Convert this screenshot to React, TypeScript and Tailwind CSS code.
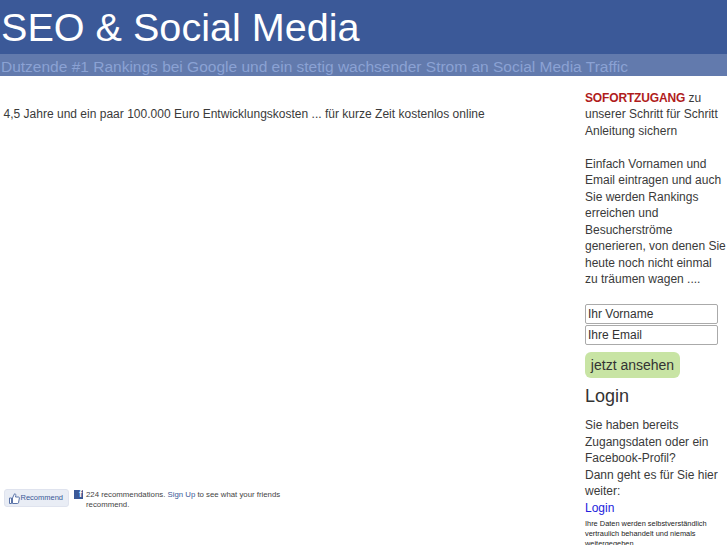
export default function App() {
  return (
    <div className="h-[545px] w-[727px] overflow-hidden bg-white font-['Liberation_Sans',Arial,sans-serif] text-[#3a3a3a]">
      <header className="h-[54px] bg-[#3b5998] pl-px text-[39.6px] leading-[54px] text-white">SEO &amp; Social Media</header>
      <div className="h-[22px] overflow-hidden bg-[#627aad] pl-px text-[15.500px] leading-[25px] text-[#8ba2d4]">
        Dutzende #1 Rankings bei Google und ein stetig wachsender Strom an Social Media Traffic
      </div>
      <div className="flex h-[469px]">
        <main className="flex w-[585px] shrink-0 flex-col pl-[3.500px]">
          <p className="mt-[30px] text-[12px] leading-[16px] tracking-[0.01px]">4,5 Jahre und ein paar 100.000 Euro Entwicklungskosten ... für kurze Zeit kostenlos online</p>
          <div className="mt-[367px] flex items-start">
            <button className="flex h-[18px] w-[65px] items-center gap-px rounded-[3px] border border-[#dfe3ee] bg-[#e9edf5] pl-[4px] text-[7.500px] text-[#3b5998]">
              <svg width="11" height="11" viewBox="0 0 11 11" fill="#fff" stroke="#5b74a8" strokeWidth="1"><path d="M.5 5h2v5.500h-2zM3.500 5l2-4.200c1 0 1.500.6 1.300 1.600L6.500 4h3c.6 0 1 .5.900 1l-.9 4.800c-.1.400-.4.700-.8.700H3.500z" /></svg>
              Recommend
            </button>
            <div className="ml-[5.500px] mt-px flex h-[9px] w-[9px] shrink-0 items-end justify-end bg-[#3b5998] pr-px text-[9px] font-bold leading-[9px] text-white">f</div>
            <p className="ml-[3px] mt-px w-[200px] text-[7.800px] leading-[10px] text-[#444]">
              224 recommendations. <span className="text-[#3b5998]">Sign Up</span> to see what your friends recommend.
            </p>
          </div>
        </main>
        <aside className="w-[142px] shrink-0 pt-[13.750px] text-[12px] leading-[16.500px]">
          <p><b className="tracking-[-0.15px] text-[#b01c1c]">SOFORTZUGANG</b> zu unserer Schritt für Schritt Anleitung sichern</p>
          <p className="mt-[16.500px]">Einfach Vornamen und Email eintragen und auch Sie werden Rankings erreichen und Besucherströme generieren, von denen Sie heute noch nicht einmal zu träumen wagen ....</p>
          <div className="mt-[16.500px] flex w-[133px] flex-col gap-px">
            <input readOnly value="Ihr Vorname" className="h-5 rounded-[2px] border border-[#aaa] px-[2px] text-[12px] text-[#333]" />
            <input readOnly value="Ihre Email" className="h-5 rounded-[2px] border border-[#aaa] px-[2px] text-[12px] text-[#333]" />
          </div>
          <button className="mt-[7px] h-[26px] w-[95px] rounded-[6px] bg-[#c8e4a4] text-[14px] text-[#333]">jetzt ansehen</button>
          <h2 className="mt-[6px] text-[18px] leading-[24px] text-[#333]">Login</h2>
          <p className="mt-[8.750px]">Sie haben bereits Zugangsdaten oder ein Facebook-Profil?<br />Dann geht es für Sie hier weiter:<br /><a className="text-[#2222dd]">Login</a></p>
          <p className="mt-[3px] text-[7.400px] leading-[10px] text-[#222]">Ihre Daten werden selbstverständlich vertraulich behandelt und niemals weitergegeben</p>
        </aside>
      </div>
    </div>
  );
}
